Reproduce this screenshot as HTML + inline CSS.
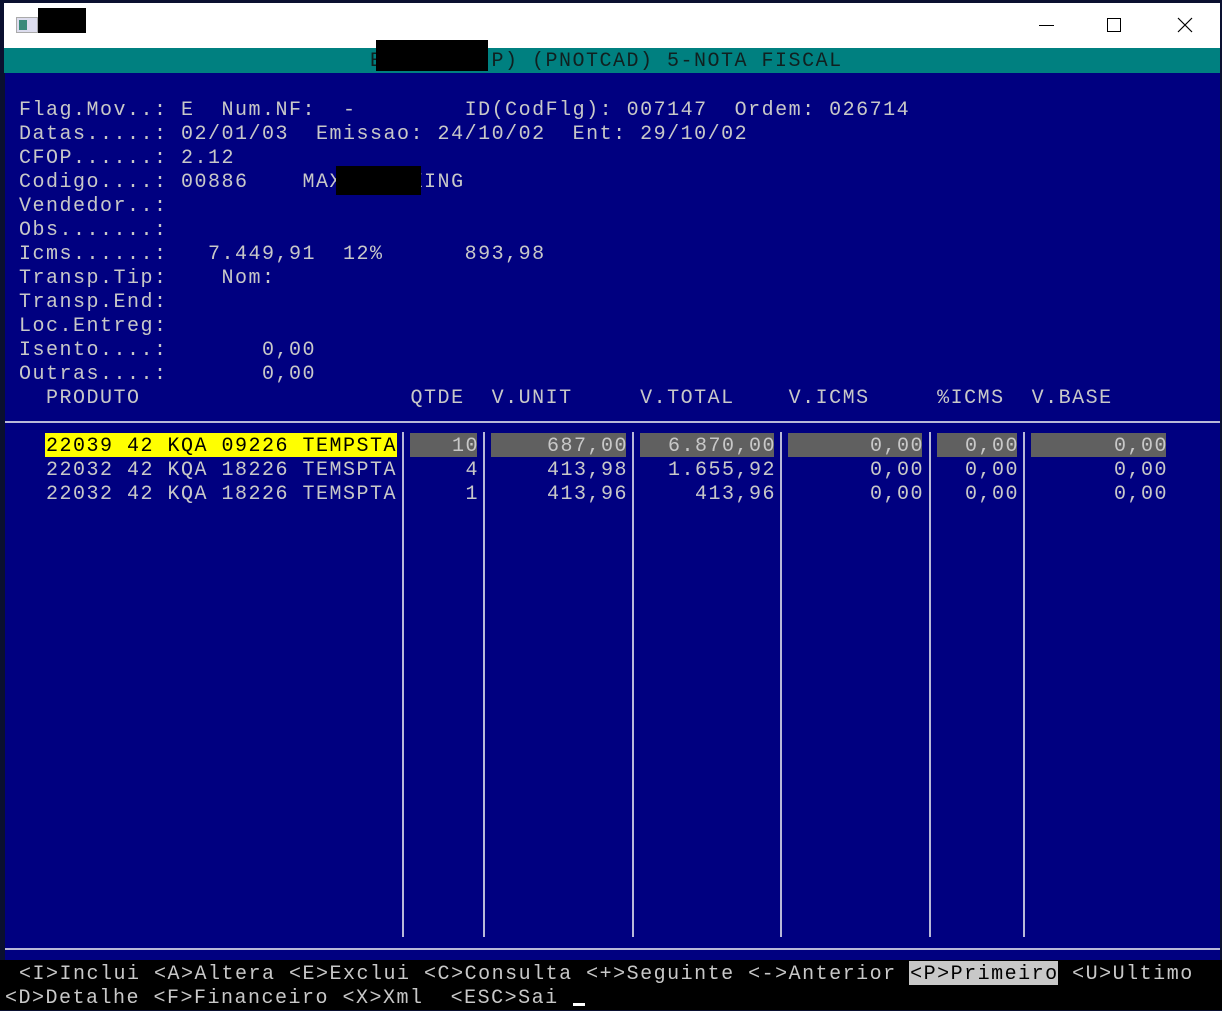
<!DOCTYPE html>
<html><head><meta charset="utf-8"><style>
body{margin:0;width:1222px;height:1010px;background:#0a1030;position:relative;overflow:hidden;font-family:"Liberation Mono",monospace;}
.t{position:absolute;white-space:pre;font-size:20px;letter-spacing:1.5px;line-height:24px;height:24px;color:#c8c8c8;margin-top:2px;}
.r{text-align:right;}
.box{position:absolute;}
.vl{position:absolute;top:432px;height:505px;width:2px;background:#b8b8d8;}
</style></head><body>
<div class="box" style="left:4px;top:3px;width:1216px;height:45px;background:#fff"></div>
<div class="box" style="left:16px;top:17px;width:22px;height:16px;background:#dde;border:1px solid #aaa;box-sizing:border-box"></div>
<div class="box" style="left:19px;top:20px;width:8px;height:10px;background:#3a8a7a"></div>
<div class="box" style="left:38px;top:8px;width:48px;height:25px;background:#000"></div>
<div class="box" style="left:1039px;top:25px;width:15px;height:1px;background:#000"></div>
<div class="box" style="left:1107px;top:18px;width:14px;height:14px;border:1px solid #000;box-sizing:border-box"></div>
<svg class="box" style="left:1177px;top:17px" width="16" height="16"><path d="M1 1L15 15M15 1L1 15" stroke="#000" stroke-width="1.2"/></svg>
<div class="box" style="left:4px;top:48px;width:1216px;height:25px;background:#008080"></div>
<div class="t" style="left:370px;top:48px;color:#102020">E       IP) (PNOTCAD) 5-NOTA FISCAL</div>
<div class="box" style="left:376px;top:40px;width:112px;height:31px;background:#000"></div>
<div class="box" style="left:5px;top:73px;width:1215px;height:887px;background:#000080"></div>
<div class="box" style="left:5px;top:421px;width:1215px;height:2px;background:#b8b8d8"></div>
<div class="box" style="left:5px;top:948px;width:1215px;height:2px;background:#b8b8d8"></div>
<div class="box" style="left:0;top:960px;width:1222px;height:50px;background:#000"></div>

<div class="t" style="left:19px;top:97px">Flag.Mov..: E  Num.NF:  -        ID(CodFlg): 007147  Ordem: 026714</div>
<div class="t" style="left:19px;top:121px">Datas.....: 02/01/03  Emissao: 24/10/02  Ent: 29/10/02</div>
<div class="t" style="left:19px;top:145px">CFOP......: 2.12</div>
<div class="t" style="left:19px;top:169px">Codigo....: 00886    MAXXXXXXXING</div>
<div class="box" style="left:336px;top:166px;width:85px;height:29px;background:#000"></div>
<div class="t" style="left:19px;top:193px">Vendedor..:</div>
<div class="t" style="left:19px;top:217px">Obs.......:</div>
<div class="t" style="left:19px;top:241px">Icms......:   7.449,91  12%      893,98</div>
<div class="t" style="left:19px;top:265px">Transp.Tip:    Nom:</div>
<div class="t" style="left:19px;top:289px">Transp.End:</div>
<div class="t" style="left:19px;top:313px">Loc.Entreg:</div>
<div class="t" style="left:19px;top:337px">Isento....:       0,00</div>
<div class="t" style="left:19px;top:361px">Outras....:       0,00</div>
<div class="t" style="left:19px;top:385px">  PRODUTO                    QTDE  V.UNIT     V.TOTAL    V.ICMS     %ICMS  V.BASE</div>

<div class="vl" style="left:402px"></div><div class="vl" style="left:483px"></div><div class="vl" style="left:632px"></div><div class="vl" style="left:780px"></div><div class="vl" style="left:929px"></div><div class="vl" style="left:1023px"></div>

<div class="box" style="left:45px;top:433px;width:352px;height:24px;background:#ffff00"></div>
<div class="box" style="left:410px;top:433px;width:67px;height:24px;background:#606060"></div>
<div class="box" style="left:491px;top:433px;width:135px;height:24px;background:#606060"></div>
<div class="box" style="left:640px;top:433px;width:134px;height:24px;background:#606060"></div>
<div class="box" style="left:788px;top:433px;width:134px;height:24px;background:#606060"></div>
<div class="box" style="left:937px;top:433px;width:80px;height:24px;background:#606060"></div>
<div class="box" style="left:1031px;top:433px;width:135px;height:24px;background:#606060"></div>

<div class="t" style="left:46px;top:433px;color:#000">22039 42 KQA 09226 TEMPSTA</div>
<div class="t" style="left:46px;top:457px">22032 42 KQA 18226 TEMSPTA</div>
<div class="t" style="left:46px;top:481px">22032 42 KQA 18226 TEMSPTA</div>

<div class="t r" style="left:380px;width:99px;top:433px">10</div>
<div class="t r" style="left:380px;width:99px;top:457px">4</div>
<div class="t r" style="left:380px;width:99px;top:481px">1</div>
<div class="t r" style="left:480px;width:148px;top:433px">687,00</div>
<div class="t r" style="left:480px;width:148px;top:457px">413,98</div>
<div class="t r" style="left:480px;width:148px;top:481px">413,96</div>
<div class="t r" style="left:620px;width:156px;top:433px">6.870,00</div>
<div class="t r" style="left:620px;width:156px;top:457px">1.655,92</div>
<div class="t r" style="left:620px;width:156px;top:481px">413,96</div>
<div class="t r" style="left:780px;width:144px;top:433px">0,00</div>
<div class="t r" style="left:780px;width:144px;top:457px">0,00</div>
<div class="t r" style="left:780px;width:144px;top:481px">0,00</div>
<div class="t r" style="left:920px;width:99px;top:433px">0,00</div>
<div class="t r" style="left:920px;width:99px;top:457px">0,00</div>
<div class="t r" style="left:920px;width:99px;top:481px">0,00</div>
<div class="t r" style="left:1020px;width:148px;top:433px">0,00</div>
<div class="t r" style="left:1020px;width:148px;top:457px">0,00</div>
<div class="t r" style="left:1020px;width:148px;top:481px">0,00</div>

<div class="box" style="left:909px;top:961px;width:149px;height:24px;background:#c8c8c8"></div>
<div class="t" style="left:19px;top:961px">&lt;I&gt;Inclui &lt;A&gt;Altera &lt;E&gt;Exclui &lt;C&gt;Consulta &lt;+&gt;Seguinte &lt;-&gt;Anterior <span style="color:#000">&lt;P&gt;Primeiro</span> &lt;U&gt;Ultimo</div>
<div class="t" style="left:5px;top:985px">&lt;D&gt;Detalhe &lt;F&gt;Financeiro &lt;X&gt;Xml  &lt;ESC&gt;Sai</div>
<div class="box" style="left:573px;top:1003px;width:12px;height:3px;background:#fff"></div>
</body></html>
